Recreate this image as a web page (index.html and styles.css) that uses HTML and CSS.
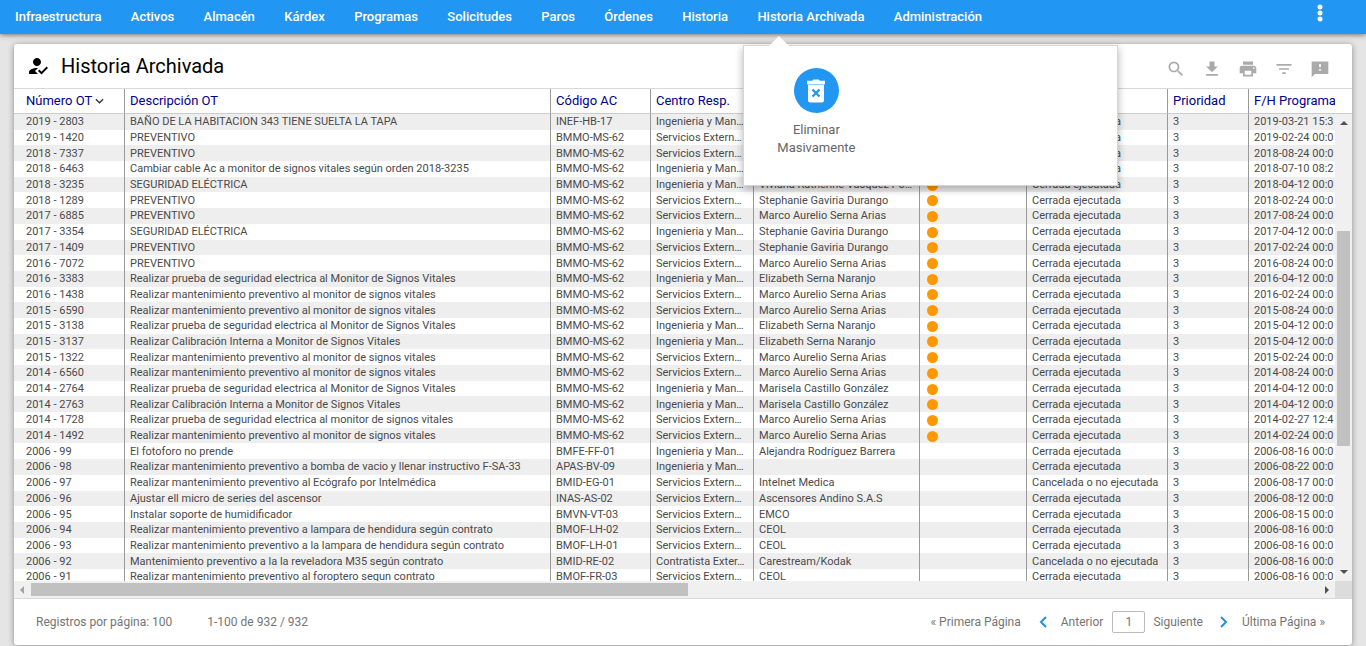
FILE: index.html
```html
<!DOCTYPE html>
<html lang="es">
<head>
<meta charset="utf-8">
<title>Historia Archivada</title>
<link rel="stylesheet" href="styles.css">
</head>
<body>
<header class="topbar">
  <nav class="nav">
    <ul class="nav-list">
      <li class="nav-item"><a href="#">Infraestructura</a></li>
      <li class="nav-item"><a href="#">Activos</a></li>
      <li class="nav-item"><a href="#">Almacén</a></li>
      <li class="nav-item"><a href="#">Kárdex</a></li>
      <li class="nav-item"><a href="#">Programas</a></li>
      <li class="nav-item"><a href="#">Solicitudes</a></li>
      <li class="nav-item"><a href="#">Paros</a></li>
      <li class="nav-item"><a href="#">Órdenes</a></li>
      <li class="nav-item"><a href="#">Historia</a></li>
      <li class="nav-item"><a href="#">Historia Archivada</a>
        <div class="popup">
          <button class="popup-action" type="button">
            <span class="popup-circle"><svg viewBox="0 0 24 24" width="24" height="24"><path fill="#fff" d="M3 1.700h5.200L9.200.6h5.600l1 1.100H21v3.500H3zM4 5.800h16V21a2.500 2.500 0 0 1-2.500 2.500h-11A2.500 2.500 0 0 1 4 21z"/><path d="M8.500 10.500l7 7M15.500 10.500l-7 7" stroke="#2196f3" stroke-width="2.300" fill="none"/></svg></span>
            <span class="popup-label">Eliminar Masivamente</span>
          </button>
        </div>
      </li>
      <li class="nav-item"><a href="#">Administración</a></li>
    </ul>
  </nav>
  <button class="menu-button" type="button" aria-label="Menú"><svg viewBox="0 0 24 24" width="24" height="24"><path fill="#fff" d="M12 8.500a2.500 2.500 0 1 0 0-5 2.500 2.500 0 0 0 0 5zm0 6a2.500 2.500 0 1 0 0-5 2.500 2.500 0 0 0 0 5zm0 6a2.500 2.500 0 1 0 0-5 2.500 2.500 0 0 0 0 5z"/></svg></button>
</header>
<main class="card">
  <div class="card-head">
    <svg class="title-icon" viewBox="0 0 24 24" width="24" height="24"><path d="M9 17l3-2.940c-.39-.04-.68-.06-1-.06-2.670 0-8 1.340-8 4v2h9l-3-3zm2-5c2.210 0 4-1.790 4-4s-1.790-4-4-4-4 1.790-4 4 1.790 4 4 4M15.470 20.500L12 17l1.400-1.410 2.070 2.080 5.130-5.170 1.400 1.410z"/></svg>
    <h1 class="title">Historia Archivada</h1>
    <div class="tools">
      <button type="button" aria-label="Buscar"><svg viewBox="0 0 24 24"><path d="M15.500 14h-.79l-.28-.27A6.471 6.471 0 0 0 16 9.500 6.500 6.500 0 1 0 9.500 16c1.610 0 3.090-.59 4.230-1.570l.27.28v.79l5 4.990L20.490 19l-4.990-5zm-6 0C7.010 14 5 11.990 5 9.500S7.010 5 9.500 5 14 7.010 14 9.500 11.990 14 9.500 14z"/></svg></button>
      <button type="button" aria-label="Descargar"><svg viewBox="0 0 24 24"><path d="M19 9h-4V3H9v6H5l7 7 7-7zM5 18v2h14v-2H5z"/></svg></button>
      <button type="button" aria-label="Imprimir"><svg viewBox="0 0 24 24"><path d="M19 8H5c-1.660 0-3 1.340-3 3v6h4v4h12v-4h4v-6c0-1.660-1.340-3-3-3zm-3 11H8v-5h8v5zm3-7c-.55 0-1-.45-1-1s.45-1 1-1 1 .45 1 1-.45 1-1 1zm-1-9H6v4h12V3z"/></svg></button>
      <button type="button" aria-label="Filtrar"><svg viewBox="0 0 24 24"><path d="M10 18h4v-2h-4v2zM3 6v2h18V6H3zm3 7h12v-2H6v2z"/></svg></button>
      <button type="button" aria-label="Comentarios"><svg viewBox="0 0 24 24"><path d="M22 3H2v19l4-4h16V3zm-9 11h-2v-2h2v2zm0-4h-2V6h2v4z"/></svg></button>
    </div>
  </div>
  <div class="grid">
    <div class="viewport">
      <table class="orders">
        <colgroup><col class="c-num"><col><col class="c-code"><col class="c-center"><col class="c-resp"><col class="c-flag"><col class="c-state"><col class="c-prio"><col class="c-date"></colgroup>
        <thead>
          <tr><th>Número OT <svg class="sort" viewBox="0 0 10 6" width="9" height="6"><path d="M1 1l4 4 4-4" fill="none" stroke="#333" stroke-width="1.500"/></svg></th><th>Descripción OT</th><th>Código AC</th><th>Centro Resp.</th><th></th><th></th><th></th><th>Prioridad</th><th>F/H Programa</th></tr>
        </thead>
        <tbody>
          <tr><td>2019 - 2803<td>BAÑO DE LA HABITACION 343 TIENE SUELTA LA TAPA<td>INEF-HB-17<td>Ingenieria y Man…<td><td><td>Cerrada ejecutada<td>3<td>2019-03-21 15:3
          <tr><td>2019 - 1420<td>PREVENTIVO<td>BMMO-MS-62<td>Servicios Extern…<td><td><td>Cerrada ejecutada<td>3<td>2019-02-24 00:0
          <tr><td>2018 - 7337<td>PREVENTIVO<td>BMMO-MS-62<td>Servicios Extern…<td><td><td>Cerrada ejecutada<td>3<td>2018-08-24 00:0
          <tr><td>2018 - 6463<td>Cambiar cable Ac a monitor de signos vitales según orden 2018-3235<td>BMMO-MS-62<td>Ingenieria y Man…<td><td><td>Cerrada ejecutada<td>3<td>2018-07-10 08:2
          <tr><td>2018 - 3235<td>SEGURIDAD ELÉCTRICA<td>BMMO-MS-62<td>Ingenieria y Man…<td>Viviana Katherine Vásquez Po…<td><i class="dot"></i><td>Cerrada ejecutada<td>3<td>2018-04-12 00:0
          <tr><td>2018 - 1289<td>PREVENTIVO<td>BMMO-MS-62<td>Servicios Extern…<td>Stephanie Gaviria Durango<td><i class="dot"></i><td>Cerrada ejecutada<td>3<td>2018-02-24 00:0
          <tr><td>2017 - 6885<td>PREVENTIVO<td>BMMO-MS-62<td>Servicios Extern…<td>Marco Aurelio Serna Arias<td><i class="dot"></i><td>Cerrada ejecutada<td>3<td>2017-08-24 00:0
          <tr><td>2017 - 3354<td>SEGURIDAD ELÉCTRICA<td>BMMO-MS-62<td>Ingenieria y Man…<td>Stephanie Gaviria Durango<td><i class="dot"></i><td>Cerrada ejecutada<td>3<td>2017-04-12 00:0
          <tr><td>2017 - 1409<td>PREVENTIVO<td>BMMO-MS-62<td>Servicios Extern…<td>Stephanie Gaviria Durango<td><i class="dot"></i><td>Cerrada ejecutada<td>3<td>2017-02-24 00:0
          <tr><td>2016 - 7072<td>PREVENTIVO<td>BMMO-MS-62<td>Servicios Extern…<td>Marco Aurelio Serna Arias<td><i class="dot"></i><td>Cerrada ejecutada<td>3<td>2016-08-24 00:0
          <tr><td>2016 - 3383<td>Realizar prueba de seguridad electrica al Monitor de Signos Vitales<td>BMMO-MS-62<td>Ingenieria y Man…<td>Elizabeth Serna Naranjo<td><i class="dot"></i><td>Cerrada ejecutada<td>3<td>2016-04-12 00:0
          <tr><td>2016 - 1438<td>Realizar mantenimiento preventivo al monitor de signos vitales<td>BMMO-MS-62<td>Servicios Extern…<td>Marco Aurelio Serna Arias<td><i class="dot"></i><td>Cerrada ejecutada<td>3<td>2016-02-24 00:0
          <tr><td>2015 - 6590<td>Realizar mantenimiento preventivo al monitor de signos vitales<td>BMMO-MS-62<td>Servicios Extern…<td>Marco Aurelio Serna Arias<td><i class="dot"></i><td>Cerrada ejecutada<td>3<td>2015-08-24 00:0
          <tr><td>2015 - 3138<td>Realizar prueba de seguridad electrica al Monitor de Signos Vitales<td>BMMO-MS-62<td>Ingenieria y Man…<td>Elizabeth Serna Naranjo<td><i class="dot"></i><td>Cerrada ejecutada<td>3<td>2015-04-12 00:0
          <tr><td>2015 - 3137<td>Realizar Calibración Interna a Monitor de Signos Vitales<td>BMMO-MS-62<td>Ingenieria y Man…<td>Elizabeth Serna Naranjo<td><i class="dot"></i><td>Cerrada ejecutada<td>3<td>2015-04-12 00:0
          <tr><td>2015 - 1322<td>Realizar mantenimiento preventivo al monitor de signos vitales<td>BMMO-MS-62<td>Servicios Extern…<td>Marco Aurelio Serna Arias<td><i class="dot"></i><td>Cerrada ejecutada<td>3<td>2015-02-24 00:0
          <tr><td>2014 - 6560<td>Realizar mantenimiento preventivo al monitor de signos vitales<td>BMMO-MS-62<td>Servicios Extern…<td>Marco Aurelio Serna Arias<td><i class="dot"></i><td>Cerrada ejecutada<td>3<td>2014-08-24 00:0
          <tr><td>2014 - 2764<td>Realizar prueba de seguridad electrica al Monitor de Signos Vitales<td>BMMO-MS-62<td>Ingenieria y Man…<td>Marisela Castillo González<td><i class="dot"></i><td>Cerrada ejecutada<td>3<td>2014-04-12 00:0
          <tr><td>2014 - 2763<td>Realizar Calibración Interna a Monitor de Signos Vitales<td>BMMO-MS-62<td>Ingenieria y Man…<td>Marisela Castillo González<td><i class="dot"></i><td>Cerrada ejecutada<td>3<td>2014-04-12 00:0
          <tr><td>2014 - 1728<td>Realizar prueba de seguridad electrica al monitor de signos vitales<td>BMMO-MS-62<td>Servicios Extern…<td>Marco Aurelio Serna Arias<td><i class="dot"></i><td>Cerrada ejecutada<td>3<td>2014-02-27 12:4
          <tr><td>2014 - 1492<td>Realizar mantenimiento preventivo al monitor de signos vitales<td>BMMO-MS-62<td>Servicios Extern…<td>Marco Aurelio Serna Arias<td><i class="dot"></i><td>Cerrada ejecutada<td>3<td>2014-02-24 00:0
          <tr><td>2006 - 99<td>El fotoforo no prende<td>BMFE-FF-01<td>Ingenieria y Man…<td>Alejandra Rodríguez Barrera<td><td>Cerrada ejecutada<td>3<td>2006-08-16 00:0
          <tr><td>2006 - 98<td>Realizar mantenimiento preventivo a bomba de vacio y llenar instructivo F-SA-33<td>APAS-BV-09<td>Ingenieria y Man…<td><td><td>Cerrada ejecutada<td>3<td>2006-08-22 00:0
          <tr><td>2006 - 97<td>Realizar mantenimiento preventivo al Ecógrafo por Intelmédica<td>BMID-EG-01<td>Servicios Extern…<td>Intelnet Medica<td><td>Cancelada o no ejecutada<td>3<td>2006-08-17 00:0
          <tr><td>2006 - 96<td>Ajustar ell micro de series del ascensor<td>INAS-AS-02<td>Servicios Extern…<td>Ascensores Andino S.A.S<td><td>Cerrada ejecutada<td>3<td>2006-08-12 00:0
          <tr><td>2006 - 95<td>Instalar soporte de humidificador<td>BMVN-VT-03<td>Servicios Extern…<td>EMCO<td><td>Cerrada ejecutada<td>3<td>2006-08-15 00:0
          <tr><td>2006 - 94<td>Realizar mantenimiento preventivo a lampara de hendidura según contrato<td>BMOF-LH-02<td>Servicios Extern…<td>CEOL<td><td>Cerrada ejecutada<td>3<td>2006-08-16 00:0
          <tr><td>2006 - 93<td>Realizar mantenimiento preventivo a la lampara de hendidura según contrato<td>BMOF-LH-01<td>Servicios Extern…<td>CEOL<td><td>Cerrada ejecutada<td>3<td>2006-08-16 00:0
          <tr><td>2006 - 92<td>Mantenimiento preventivo a la la reveladora M35 según contrato<td>BMID-RE-02<td>Contratista Exter…<td>Carestream/Kodak<td><td>Cancelada o no ejecutada<td>3<td>2006-08-16 00:0
          <tr><td>2006 - 91<td>Realizar mantenimiento preventivo al foroptero segun contrato<td>BMOF-FR-03<td>Servicios Extern…<td>CEOL<td><td>Cerrada ejecutada<td>3<td>2006-08-16 00:0
        </tbody>
      </table>
    </div>
    <div class="vcol">
      <div class="vcol-head"></div>
      <div class="vbar">
        <span class="arrow"><svg viewBox="0 0 17 17"><path d="M5 11l4-4 4 4z" fill="#505050"/></svg></span>
        <span class="v-before"></span><span class="v-thumb"></span><span class="v-after"></span>
        <span class="arrow"><svg viewBox="0 0 17 17"><path d="M5 6l4 4 4-4z" fill="#505050"/></svg></span>
      </div>
    </div>
    <div class="hbar">
      <span class="arrow"><svg viewBox="0 0 17 17"><path d="M10 5L6 9l4 4z" fill="#a3a3a3"/></svg></span>
      <span class="h-thumb"></span><span class="h-after"></span>
      <span class="arrow"><svg viewBox="0 0 17 17"><path d="M7 5l4 4-4 4z" fill="#505050"/></svg></span>
    </div>
    <div class="corner"></div>
  </div>
  <footer class="footer">
    <span class="per-page">Registros por página: 100</span>
    <span>1-100 de 932 / 932</span>
    <div class="pager">
      <a class="first" href="#">« Primera Página</a>
      <a class="prev" href="#"><svg viewBox="0 0 8 12" width="8" height="12"><path d="M7 1L2 6l5 5"/></svg>Anterior</a>
      <input class="page" type="text" value="1" aria-label="Página">
      <a class="next" href="#">Siguiente<svg viewBox="0 0 8 12" width="8" height="12"><path d="M1 1l5 5-5 5"/></svg></a>
      <a class="last" href="#">Última Página »</a>
    </div>
  </footer>
</main>
</body>
</html>
```
FILE: styles.css
```css
* { box-sizing: border-box; }
body {
  margin: 0;
  height: 100vh;
  display: flex;
  flex-direction: column;
  overflow: hidden;
  background: #e5e5e5;
  font-family: Roboto, "Open Sans", sans-serif;
  font-size: 12px;
  color: #4a4a4a;
}
button { border: 0; padding: 0; background: none; font: inherit; color: inherit; }
a { color: inherit; text-decoration: none; }
svg { display: block; }

.topbar {
  position: relative;
  z-index: 2;
  flex: none;
  display: flex;
  justify-content: space-between;
  height: 34px;
  padding-right: 34px;
  background: #2196f3;
  box-shadow: 0 1px 5px rgba(0, 0, 0, .5);
}
.nav { width: 73vw; }
.nav-list { display: flex; justify-content: space-between; margin: 0; padding: 0 1px; list-style: none; }
.nav-item { position: relative; padding: 0 14px; color: #fff; font-size: 13px; font-weight: 500; line-height: 33px; white-space: nowrap; }
.menu-button { align-self: flex-start; padding-top: 1px; }

.popup {
  position: absolute;
  top: 45px;
  left: 0;
  width: 375px;
  height: 141px;
  padding: 22px;
  border: 1px solid #d6d6d6;
  background: #fff;
  box-shadow: 0 3px 8px rgba(0, 0, 0, .3);
  white-space: normal;
}
.popup::before {
  content: "";
  position: absolute;
  top: -10px;
  left: 25px;
  border: solid transparent;
  border-width: 0 10px 10px;
  border-bottom-color: #fff;
}
.popup-action { display: flex; flex-direction: column; align-items: center; width: 100px; gap: 8px; color: #666; font-weight: 400; }
.popup-circle { display: grid; place-items: center; width: 45px; height: 45px; border-radius: 50%; background: #2196f3; }
.popup-label { line-height: 18px; text-align: center; }

.card {
  flex: 1;
  min-height: 0;
  display: flex;
  flex-direction: column;
  margin: 10px 14px 1px;
  border-radius: 3px;
  background: #fff;
  box-shadow: 0 1px 6px rgba(0, 0, 0, .4);
}
.card-head { flex: none; display: flex; align-items: center; height: 45px; padding: 0 22px 0 12px; border-bottom: 1px solid #d8d8d8; }
.title { margin: 0 0 0 11px; color: #000; font-size: 20px; font-weight: 400; }
.tools { display: flex; gap: 16px; margin-left: auto; padding-top: 5px; }
.tools svg { width: 20px; height: 20px; fill: #aaa; }

.grid { flex: 1; min-height: 0; display: grid; grid-template-columns: minmax(0, 1fr) 17px; grid-template-rows: minmax(0, 1fr) 17px; }
.viewport { overflow: hidden; }
.orders { width: 100%; height: 496px; table-layout: fixed; border-collapse: separate; border-spacing: 0; }
.c-num { width: 110px; }
.c-code { width: 100px; }
.c-center { width: 103px; }
.c-resp { width: 166px; }
.c-flag { width: 107px; }
.c-state { width: 141px; }
.c-prio { width: 81px; }
.c-date { width: 87px; }
.orders th, .orders td {
  padding: 0 5px;
  border-left: 1px solid #999;
  overflow: hidden;
  text-align: left;
  text-overflow: ellipsis;
  white-space: nowrap;
}
.orders th { height: 25px; padding-bottom: 2px; border-bottom: 1px solid #ccc; color: #00008b; font-size: 13px; font-weight: 400; }
.orders td { line-height: 15px; font-size: 11px; }
.orders th:first-child, .orders td:first-child { border-left: 0; padding-left: 12px; }
.orders th:last-child, .orders td:last-child { padding-right: 0; text-overflow: clip; }
.orders tbody tr:nth-child(odd) { background: #eee; }
.sort { display: inline-block; vertical-align: middle; }
.dot { display: block; width: 11px; height: 11px; margin: 1px 2px 0; border-radius: 50%; background: #ff9800; }

.vcol { display: flex; flex-direction: column; }
.vcol-head { height: 25px; border-bottom: 1px solid #ccc; }
.vbar { flex: 1; display: flex; flex-direction: column; background: #f0f0f0; }
.hbar { display: flex; background: #f0f0f0; }
.corner { background: #dcdcdc; }
.arrow { flex: none; width: 17px; height: 17px; }
.v-before { flex: 100; }
.v-thumb { flex: 215; margin: 0 2px; background: #c1c1c1; }
.v-after { flex: 118; }
.h-thumb { flex: 657; margin: 2px 0; background: #c1c1c1; }
.h-after { flex: 630; }

.footer { flex: none; display: flex; align-items: center; height: 47px; padding: 0 27px 0 22px; border-top: 1px solid #d8d8d8; color: #757575; }
.per-page { margin-right: 35px; }
.pager { display: flex; align-items: center; margin-left: auto; }
.pager svg { fill: none; stroke: #1e90e0; stroke-width: 2; }
.prev, .next { display: flex; align-items: center; }
.prev { gap: 14px; margin: 0 9px 0 18px; }
.next { gap: 17px; margin: 0 14px 0 8px; }
.page { width: 33px; height: 22px; padding: 0; border: 1px solid #bbb; border-radius: 2px; background: #fff; color: #757575; font: inherit; text-align: center; }
```
